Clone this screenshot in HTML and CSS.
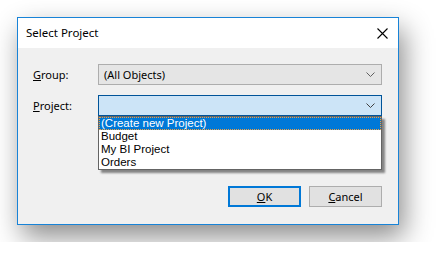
FILE: index.html
```html
<!DOCTYPE html>
<html lang="en">
<head>
	<meta charset="UTF-8" />
	<meta name="viewport" content="width=device-width, initial-scale=1.0" />
	<title>Select Project</title>
	<link rel="stylesheet" href="styles.css">
</head>
<body>
    <div class="dialog">
        <div class="titlebar">
            <span class="title">Select Project</span>
            <svg class="close" width="11" height="11" viewBox="0 0 11 11">
                <path d="M0.5 0.5 L10.5 10.5 M10.5 0.5 L0.5 10.5" stroke="#000" stroke-width="1.1" fill="none" />
            </svg>
        </div>
        <div class="content">
            <div class="field-row">
                <label><u>G</u>roup:</label>
                <div class="combo">
                    <span>(All Objects)</span>
                    <svg class="chevron" width="9" height="5" viewBox="0 0 9 5">
                        <path d="M0.5 0.5 L4.5 4.5 L8.5 0.5" stroke="#606060" stroke-width="1" fill="none" />
                    </svg>
                </div>
            </div>
            <div class="field-row">
                <label><u>P</u>roject:</label>
                <div class="combo-wrap">
                    <div class="combo focused">
                        <span></span>
                        <svg class="chevron" width="9" height="5" viewBox="0 0 9 5">
                            <path d="M0.5 0.5 L4.5 4.5 L8.5 0.5" stroke="#404040" stroke-width="1" fill="none" />
                        </svg>
                    </div>
                    <ul class="dropdown">
                        <li class="selected">(Create new Project)</li>
                        <li>Budget</li>
                        <li>My BI Project</li>
                        <li>Orders</li>
                    </ul>
                </div>
            </div>
            <div class="buttons">
                <button class="default"><u>O</u>K</button>
                <button><u>C</u>ancel</button>
            </div>
        </div>
    </div>
</body>
</html>
```
FILE: styles.css
```css
body {
    margin: 0;
    padding: 17px;
    background-color: #ffffff;
    font-family: "Noto Sans", Arial, sans-serif;
    font-size: 11px;
    color: #000;
}

.dialog {
    width: 380px;
    border: 1px solid #1883d7;
    background-color: #f0f0f0;
    box-shadow: 5px 12px 26px rgba(0, 0, 0, 0.45);
}

.titlebar {
    height: 30px;
    background-color: #ffffff;
    display: flex;
    align-items: center;
    justify-content: space-between;
    padding: 0 10px 0 8px;
}

.title {
    font-size: 11.5px;
    line-height: 16px;
}

.content {
    display: flex;
    flex-direction: column;
    gap: 10px;
    padding: 16px 16px 17px 15px;
}

.field-row {
    display: flex;
    align-items: center;
}

label {
    width: 65px;
    flex: none;
}

.combo-wrap {
    position: relative;
    flex: 1;
}

.combo {
    flex: 1;
    height: 19px;
    border: 1px solid #adadad;
    background-color: #e5e5e5;
    display: flex;
    align-items: center;
    justify-content: space-between;
    padding: 0 6px 0 5px;
}

.combo.focused {
    border-color: #005499;
    background-color: #cce4f7;
}

.chevron {
    display: block;
}

.dropdown {
    position: absolute;
    top: 21px;
    left: 0;
    right: 0;
    margin: 0;
    padding: 0;
    list-style: none;
    background-color: #ffffff;
    border: 1px solid #646464;
    box-shadow: 3px 3px 2px rgba(0, 0, 0, 0.45);
    font-family: "Liberation Sans", Arial, sans-serif;
    font-size: 11.5px;
}

.dropdown li {
    height: 13px;
    line-height: 13px;
    padding: 0 2px;
}

.dropdown li.selected {
    background-color: #0078d7;
    color: #ffffff;
    outline: 1px dotted #f0a040;
    outline-offset: -1px;
}

.buttons {
    display: flex;
    justify-content: flex-end;
    gap: 8px;
    margin-top: 60px;
}

button {
    width: 73px;
    height: 21px;
    padding: 0;
    border: 1px solid #adadad;
    background-color: #e1e1e1;
    font-family: inherit;
    font-size: 11px;
    color: #000;
}

button.default {
    border: 2px solid #0078d7;
}
```
